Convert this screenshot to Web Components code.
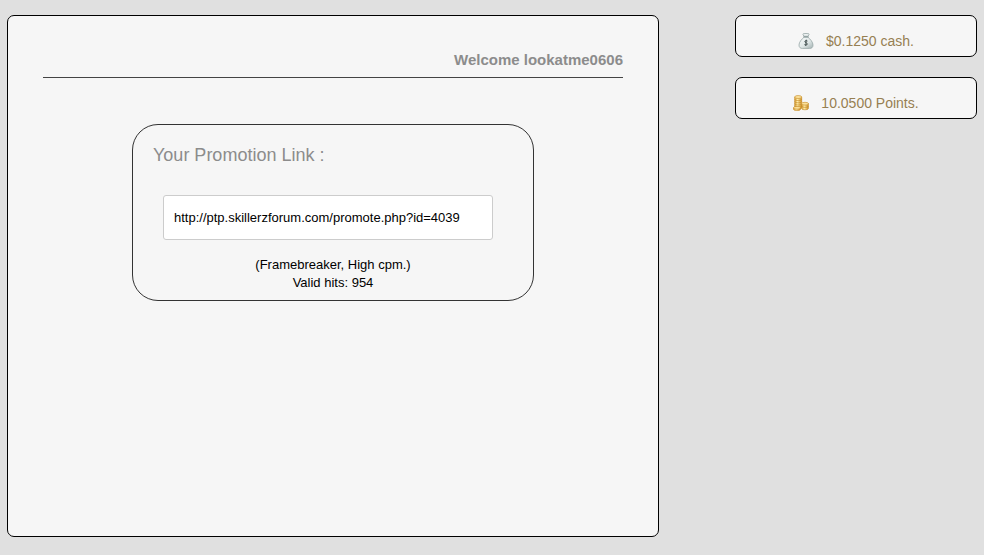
<!DOCTYPE html>
<html lang="en">
<head>
<meta charset="utf-8">
<title>Promotion</title>
<style>
    body {
        margin: 0;
        background: #e0e0e0;
        font-family: "Liberation Sans", Arial, sans-serif;
        font-size: 13px;
        color: #000;
    }
</style>
</head>
<body>
<page-layout>
    <welcome-panel slot="main" name="lookatme0606">
        <promotion-card link="http://ptp.skillerzforum.com/promote.php?id=4039" hits="954"></promotion-card>
    </welcome-panel>
    <balance-box slot="side" icon="bag">$0.1250 cash.</balance-box>
    <balance-box slot="side" icon="coins">10.0500 Points.</balance-box>
</page-layout>

<script>
class BaseElement extends HTMLElement {
    constructor() {
        super();
        this.attachShadow( { mode: 'open' } );
    }

    render() {
        const template = document.createElement( 'template' );
        template.innerHTML = this.getStyles() + this.getMarkup();
        this.shadowRoot.replaceChildren( template.content.cloneNode( true ) );
    }

    connectedCallback() { this.render() }
}

class PageLayout extends BaseElement {
    getMarkup() {
        return `
            <main><slot name="main"></slot></main>
            <aside><slot name="side"></slot></aside>
        `
    }

    getStyles() {
        return `
            <style>
                :host {
                    display: grid;
                    grid-template-columns: minmax(0, 1fr) 242px;
                    gap: 76px;
                    align-items: start;
                    padding: 15px 7px 18px;
                }
                aside {
                    display: flex;
                    flex-direction: column;
                    gap: 20px;
                }
            </style>
        `
    }
}

class WelcomePanel extends BaseElement {
    getMarkup() {
        return `
            <h1>Welcome ${this.getAttribute( 'name' )}</h1>
            <slot></slot>
        `
    }

    getStyles() {
        return `
            <style>
                :host {
                    display: block;
                    box-sizing: border-box;
                    min-height: calc(100vh - 33px);
                    padding: 35px;
                    background: #f6f6f6;
                    border: 1px solid #000;
                    border-radius: 7px;
                }
                h1 {
                    margin: 0 0 46px;
                    padding-bottom: 8px;
                    border-bottom: 1px solid #444;
                    font-size: 15px;
                    line-height: 18px;
                    text-align: right;
                    color: #8c8c8c;
                }
            </style>
        `
    }
}

class PromotionCard extends BaseElement {
    getMarkup() {
        return `
            <label for="link">Your Promotion Link :</label>
            <input id="link" type="text" readonly value="${this.getAttribute( 'link' )}">
            <p>(Framebreaker, High cpm.)<br>Valid hits: ${this.getAttribute( 'hits' )}</p>
        `
    }

    getStyles() {
        return `
            <style>
                :host {
                    display: flex;
                    flex-direction: column;
                    box-sizing: border-box;
                    max-width: 402px;
                    margin: 0 auto;
                    padding: 18px 20px 8px;
                    border: 1px solid #333;
                    border-radius: 26px;
                }
                label {
                    font-size: 18px;
                    line-height: 24px;
                    color: #8c8c8c;
                }
                input {
                    box-sizing: border-box;
                    height: 45px;
                    margin: 28px 20px 16px 10px;
                    padding: 0 10px;
                    border: 1px solid #ccc;
                    border-radius: 3px;
                    background: #fff;
                    font: inherit;
                    color: #000;
                }
                p {
                    margin: 0;
                    line-height: 18px;
                    text-align: center;
                }
            </style>
        `
    }
}

const icons = {
    bag: `
        <svg width="16" height="16" viewBox="0 0 16 16" aria-hidden="true">
            <defs>
                <linearGradient id="bag" x1="0" y1="0" x2="1" y2="1">
                    <stop offset="0" stop-color="#fbfdfd"/>
                    <stop offset=".55" stop-color="#dfe7e7"/>
                    <stop offset="1" stop-color="#a3b1b1"/>
                </linearGradient>
            </defs>
            <path d="M5.9 3.2 4.9 1.3Q5 .5 6 .7L8 .5 10 .7Q11 .5 11.1 1.3L10.1 3.2Z" fill="#f2f6f6" stroke="#93a3a3" stroke-width=".8"/>
            <path d="M6 4.2C3.8 6.2 1 9 1 12 1 14.5 2.4 15.4 4.4 15.4H11.6C13.6 15.4 15 14.5 15 12 15 9 12.2 6.2 10 4.2Z" fill="url(#bag)" stroke="#97a6a6" stroke-width=".8"/>
            <path d="M5.8 3.8H10.2" stroke="#869797" stroke-width="1" stroke-linecap="round"/>
            <path d="M9.5 8.1Q8 7.2 7 8 6.3 9 8 9.7 9.8 10.4 9.2 11.5 8.1 12.5 6.4 11.6M8.3 6.7 7.7 13" fill="none" stroke="#3c4a4a" stroke-width=".9"/>
        </svg>`,
    coins: `
        <svg width="16" height="16" viewBox="0 0 16 16" aria-hidden="true">
            <defs>
                <linearGradient id="gold">
                    <stop offset="0" stop-color="#d3992f"/>
                    <stop offset=".4" stop-color="#ffecaa"/>
                    <stop offset="1" stop-color="#cb8d22"/>
                </linearGradient>
            </defs>
            <g fill="url(#gold)" stroke="#c48a24" stroke-width=".6">
                <path d="M1.7 2V12.5A3.5 1.4 0 0 0 8.7 12.5V2Z"/>
                <path d="M1.7 4.2A3.5 1.4 0 0 0 8.7 4.2M1.7 6.4A3.5 1.4 0 0 0 8.7 6.4M1.7 8.6A3.5 1.4 0 0 0 8.7 8.6M1.7 10.8A3.5 1.4 0 0 0 8.7 10.8" fill="none"/>
                <ellipse cx="5.2" cy="2" rx="3.5" ry="1.5" fill="#fbe09a"/>
                <path d="M8.6 8.6V13.4A3.4 1.4 0 0 0 15.4 13.4V8.6Z"/>
                <path d="M8.6 11A3.4 1.4 0 0 0 15.4 11" fill="none"/>
                <ellipse cx="12" cy="8.7" rx="3.4" ry="1.4" fill="#fbe09a"/>
                <path d="M.5 12.8V14.2A3.5 1.4 0 0 0 7.5 14.2V12.8Z"/>
                <ellipse cx="4" cy="12.8" rx="3.5" ry="1.4" fill="#fbe09a"/>
            </g>
        </svg>`
};

class BalanceBox extends BaseElement {
    getMarkup() {
        return `
            ${icons[ this.getAttribute( 'icon' ) ]}
            <span><slot></slot></span>
        `
    }

    getStyles() {
        return `
            <style>
                :host {
                    display: flex;
                    justify-content: center;
                    align-items: center;
                    gap: 12px;
                    padding: 16px 8px 6px;
                    border: 1px solid #000;
                    border-radius: 7px;
                    background: #f6f6f6;
                    font-size: 14px;
                    line-height: 18px;
                    color: #967f52;
                }
            </style>
        `
    }
}

customElements.define( 'page-layout', PageLayout );
customElements.define( 'welcome-panel', WelcomePanel );
customElements.define( 'promotion-card', PromotionCard );
customElements.define( 'balance-box', BalanceBox );
</script>
</body>
</html>
